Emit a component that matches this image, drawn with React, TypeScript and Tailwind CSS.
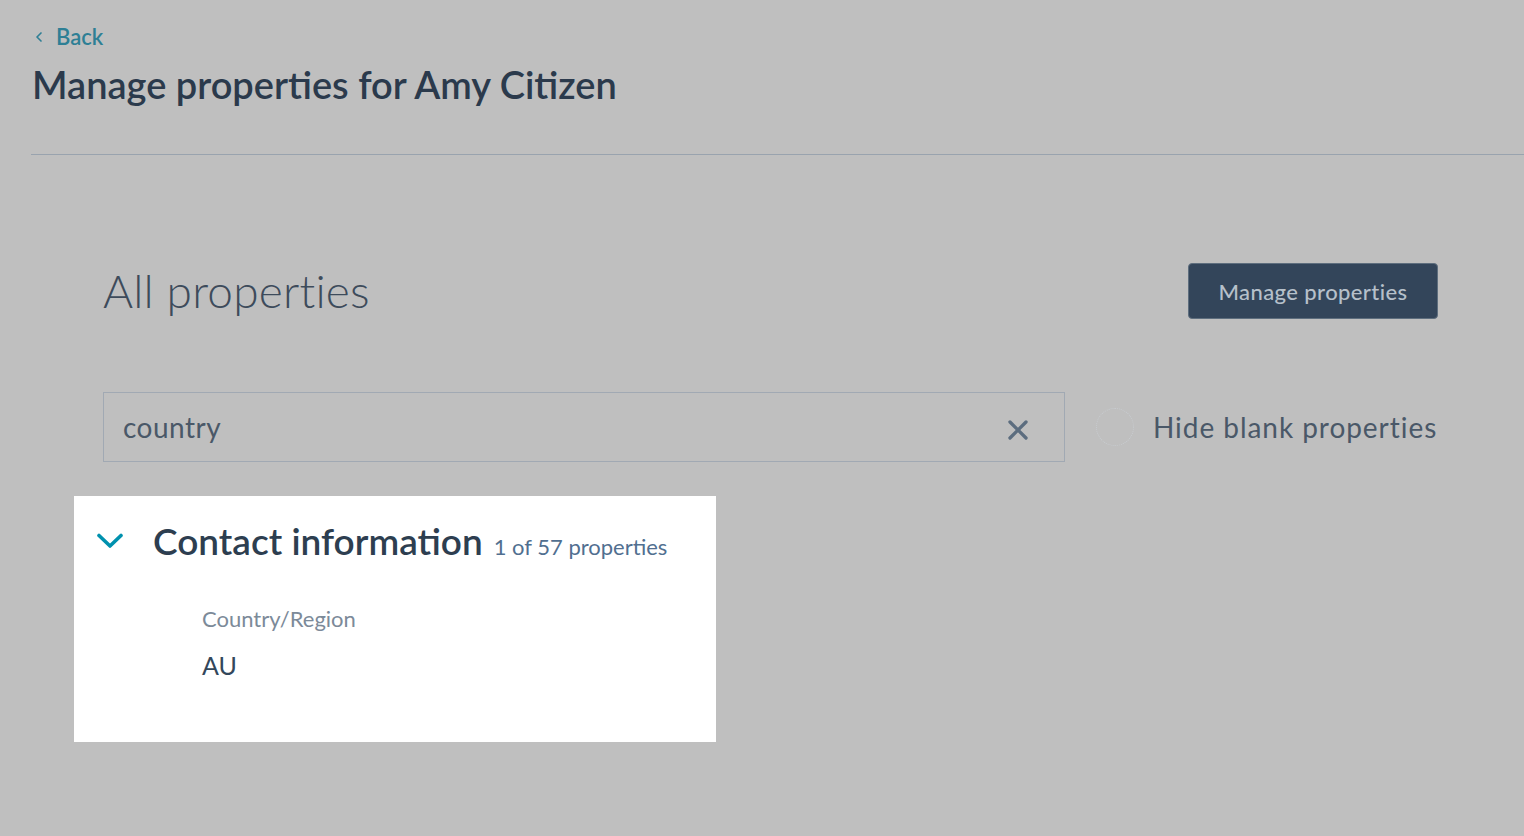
import { X, ChevronLeft } from 'lucide-react';

export default function App() {
  return (
    <div className="min-h-screen w-full bg-[#bfbfbf] font-['Lato',sans-serif] overflow-hidden">
      {/* Header */}
      <div className="pl-[32px] pt-[23px]">
        <a className="flex items-center gap-[9px] text-[#2e7f95] text-[22px] font-semibold leading-[28px]">
          <ChevronLeft className="w-[16px] h-[16px] -ml-[1px]" strokeWidth={2.5} />
          Back
        </a>
        <h1 className="mt-[10px] text-[#2b3a4c] text-[38px] font-semibold leading-[46px]">
          Manage properties for Amy Citizen
        </h1>
      </div>
      <div className="ml-[31px] mt-[47px] h-px bg-[#99a3ae]" />

      {/* All properties */}
      <div className="pl-[103px] pr-[86px] pt-[108px]">
        <div className="flex items-center justify-between">
          <h2 className="text-[#3d4b5b] text-[46px] font-light leading-[56px] tracking-[0.2px]">All properties</h2>
          <button className="w-[250px] h-[56px] rounded-[4px] bg-[#33455a] border border-[#5e6e7e] text-[#b6c0ca] text-[22px] font-medium tracking-[0.4px]">
            Manage properties
          </button>
        </div>

        <div className="mt-[73px] flex items-center">
          <div className="w-[962px] h-[70px] border border-[#a1a9b3] flex items-center justify-between pl-[19px] pr-[30px]">
            <span className="text-[#4a5868] text-[28px] tracking-[0.5px]">country</span>
            <X className="w-[32px] h-[32px] mt-[5px] text-[#5c6d7f]" strokeWidth={2.5} />
          </div>
          <div className="ml-[31px] w-[38px] h-[38px] rounded-full border border-dotted border-[#c8ccd0]" />
          <span className="ml-[19px] text-[#4a5868] text-[28px] tracking-[0.95px]">Hide blank properties</span>
        </div>
      </div>

      {/* Highlighted card */}
      <div className="ml-[74px] mt-[34px] w-[642px] h-[246px] bg-white pt-[22px]">
        <div className="flex items-baseline">
          <svg className="ml-[23px] self-center" width="26" height="16" viewBox="0 0 26 16" fill="none">
            <path d="M2 2.5 L13 13 L24 2.5" stroke="#0091ae" strokeWidth="3.6" strokeLinecap="round" strokeLinejoin="round" />
          </svg>
          <span className="ml-[30px] text-[#2d3e50] text-[37px] font-semibold leading-[46px]">Contact information</span>
          <span className="ml-[11px] text-[#516f90] text-[22px]">1 of 57 properties</span>
        </div>
        <div className="pl-[128px] pt-[41px]">
          <div className="text-[#7c8a99] text-[22px] leading-[28px]">Country/Region</div>
          <div className="mt-[17px] text-[#33475b] text-[25px] leading-[30px]">AU</div>
        </div>
      </div>
    </div>
  );
}
